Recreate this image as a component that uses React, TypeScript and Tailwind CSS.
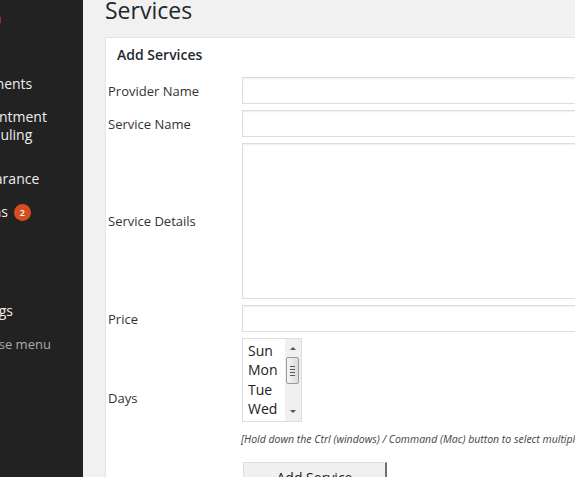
import React from "react";

const font = { fontFamily: '"Open Sans", "Noto Sans", sans-serif' };

function MenuItem({ children, className = "" }: { children: React.ReactNode; className?: string }) {
  return (
    <div className={`flex items-center pl-[38px] pr-[8px] py-[7.5px] text-[14px] leading-[18px] ${className}`}>
      {children}
    </div>
  );
}

export default function App() {
  return (
    <div className="w-[575px] h-[477px] overflow-hidden flex bg-[#f1f1f1]" style={font}>
      {/* Sidebar */}
      <div className="w-[83px] shrink-0 h-full bg-[#222222] overflow-hidden">
        <div className="ml-[-77px] w-[160px] pt-[1px] text-[#eeeeee]">
          <MenuItem className="text-[#d7842b]">Media</MenuItem>
          <MenuItem>Pages</MenuItem>
          <MenuItem>Comments</MenuItem>
          <MenuItem>Appointment Scheduling</MenuItem>
          <div className="h-[11.5px]" />
          <MenuItem>Appearance</MenuItem>
          <MenuItem>
            <span>Plugins</span>
            <span className="ml-[6px] inline-flex items-center justify-center w-[17px] h-[17px] rounded-full bg-[#d54e21] text-white text-[9px] font-semibold leading-none">
              2
            </span>
          </MenuItem>
          <MenuItem>Users</MenuItem>
          <MenuItem>Tools</MenuItem>
          <MenuItem>Settings</MenuItem>
          <div className="flex items-center pl-[38px] h-[33px] text-[13px] leading-[18px] text-[#aaaaaa]">
            Collapse menu
          </div>
        </div>
      </div>

      {/* Main */}
      <div className="flex-1 min-w-0 pl-[22px]">
        <h1 className="mt-[-4px] text-[23px] leading-[29px] font-normal text-[#23282d]">Services</h1>
        <div className="mt-[12px] w-[600px] bg-white border border-[#e5e5e5] shadow-[0_1px_1px_rgba(0,0,0,0.04)] pt-[8px] pb-[20px]">
          <h3 className="px-[11px] text-[14px] leading-[18px] font-semibold text-[#23282d]">Add Services</h3>
          <div className="mt-[13px] pl-[2px] flex flex-col gap-[6px] text-[13px] text-[#333333]">
            <div className="flex items-center">
              <div className="w-[134px] shrink-0 pt-[2px]">Provider Name</div>
              <div className="flex-1 h-[27px] border border-[#dddddd] shadow-[inset_0_1px_2px_rgba(0,0,0,0.07)] bg-white" />
            </div>
            <div className="flex items-center">
              <div className="w-[134px] shrink-0 pt-[2px]">Service Name</div>
              <div className="flex-1 h-[27px] border border-[#dddddd] shadow-[inset_0_1px_2px_rgba(0,0,0,0.07)] bg-white" />
            </div>
            <div className="flex items-center">
              <div className="w-[134px] shrink-0 pt-[2px]">Service Details</div>
              <div className="flex-1 h-[156px] border border-[#dddddd] shadow-[inset_0_1px_2px_rgba(0,0,0,0.07)] bg-white" />
            </div>
            <div className="flex items-center">
              <div className="w-[134px] shrink-0 pt-[2px]">Price</div>
              <div className="flex-1 h-[27px] border border-[#dddddd] shadow-[inset_0_1px_2px_rgba(0,0,0,0.07)] bg-white" />
            </div>
            <div className="flex items-stretch">
              <div className="w-[134px] shrink-0 flex items-center pt-[13px]">Days</div>
              <div className="flex-1 flex flex-col">
                <div className="w-[60px] h-[84px] border border-[#dddddd] bg-white flex">
                  <div className="flex-1 pl-[5px] pt-[2px] text-[14px] leading-[19.4px] text-[#222222] overflow-hidden">
                    <div>Sun</div>
                    <div>Mon</div>
                    <div>Tue</div>
                    <div>Wed</div>
                  </div>
                  <div className="w-[16px] bg-[#f0f0f0] relative">
                    <svg className="absolute left-[4px] top-[7px]" width="8" height="5" viewBox="0 0 8 5">
                      <path d="M4 1 L7 4 L1 4 Z" fill="#555" />
                    </svg>
                    <div className="absolute left-[1px] top-[18px] w-[13px] h-[27px] border border-[#9a9a9a] rounded-[2px] bg-gradient-to-r from-[#f4f4f4] to-[#dcdcdc] flex flex-col items-center justify-center gap-[2px]">
                      <div className="w-[5px] h-[1px] bg-[#555]" />
                      <div className="w-[5px] h-[1px] bg-[#555]" />
                      <div className="w-[5px] h-[1px] bg-[#555]" />
                      <div className="w-[5px] h-[1px] bg-[#555]" />
                    </div>
                    <svg className="absolute left-[4px] bottom-[7px]" width="8" height="5" viewBox="0 0 8 5">
                      <path d="M1 1 L7 1 L4 4 Z" fill="#555" />
                    </svg>
                  </div>
                </div>
                <div className="mt-[10px] ml-[-1px] text-[10.5px] leading-[15px] italic text-[#444444] whitespace-nowrap">
                  [Hold down the Ctrl (windows) / Command (Mac) button to select multiple options.]
                </div>
              </div>
            </div>
            <div className="flex mt-[9px]">
              <div className="w-[134px] shrink-0" />
              <div className="ml-[1px] w-[144px] h-[30px] bg-[#f0f0f0] border-t border-l border-[#dddddd] border-r-2 border-r-[#707070] border-b border-b-[#707070] flex items-center justify-center text-[14px] text-[#222222]">
                Add Service
              </div>
            </div>
          </div>
        </div>
      </div>
    </div>
  );
}
